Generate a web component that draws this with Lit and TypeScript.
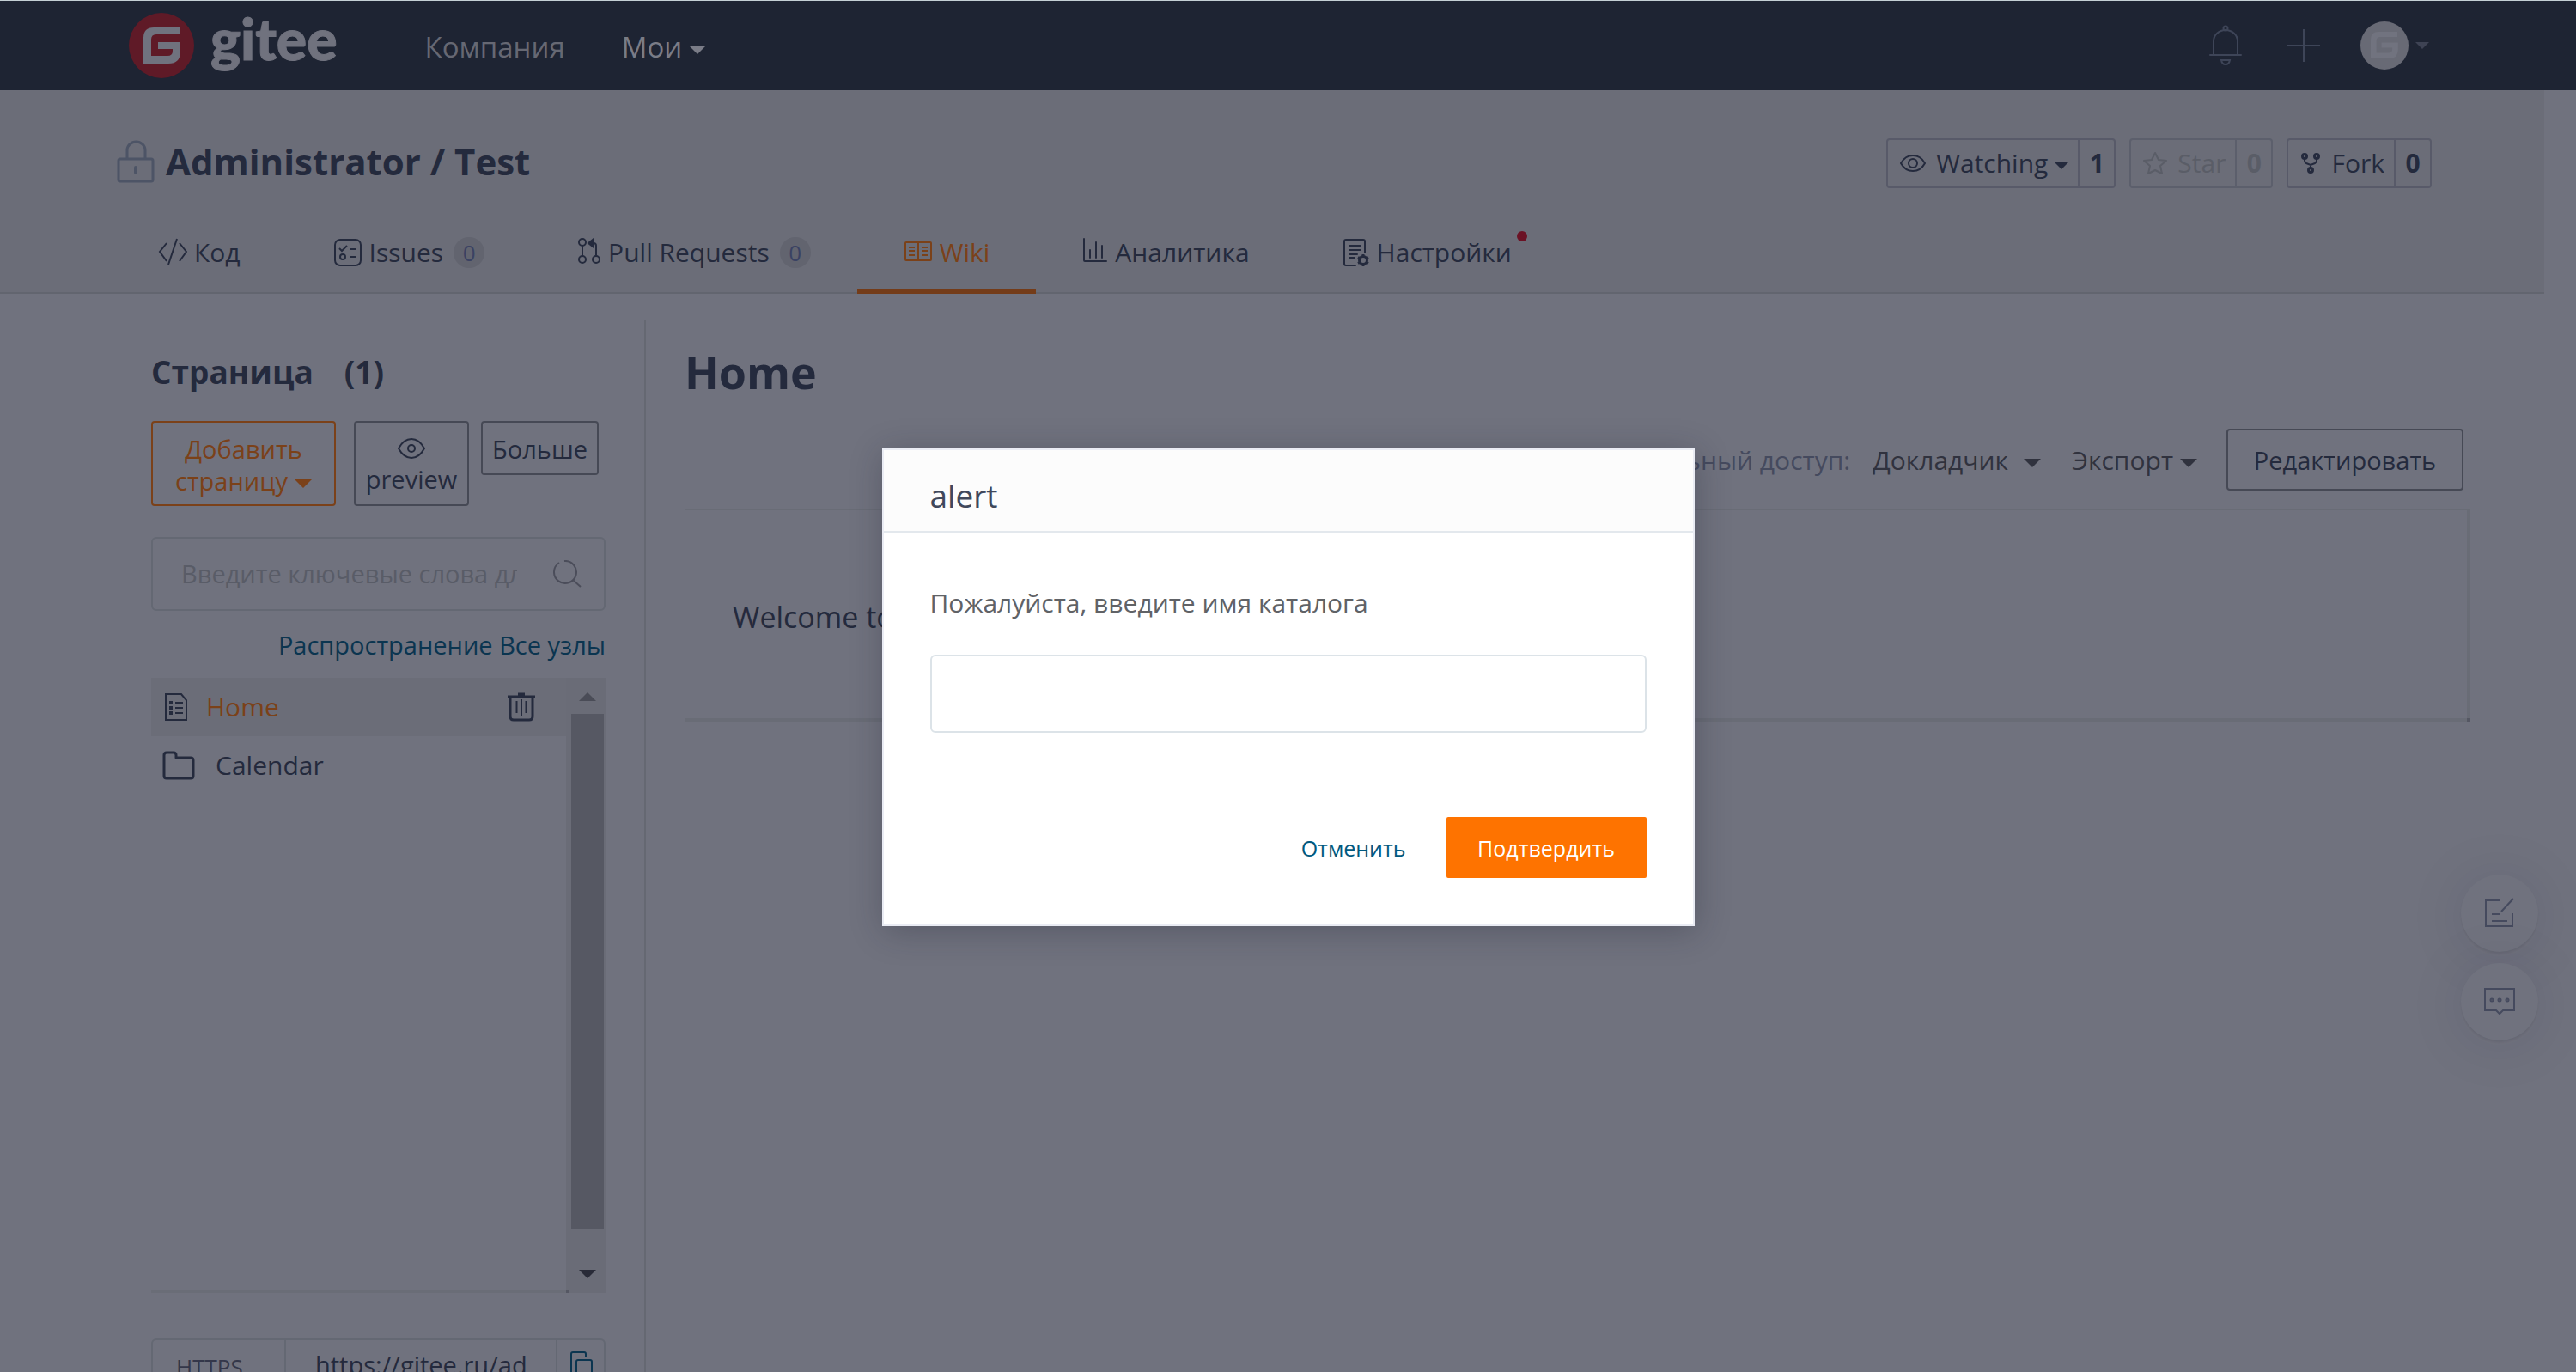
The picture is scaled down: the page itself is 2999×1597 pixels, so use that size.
import { LitElement, html, css } from "lit";
import { customElement } from "lit/decorators.js";

const gShape = "M12 0H42V8H15Q9 8 9 14V33H28Q34 33 34 27V25H17V17H43V28Q43 42 29 42H0V12Q0 0 12 0Z";

const icons = {
  logo: html`<svg width="76" height="76" viewBox="0 0 76 76" aria-hidden="true">
    <circle cx="38" cy="38" r="38" fill="#5f1a27" /><path transform="translate(17 17)" d=${gShape} fill="#70727e" /></svg>`,
  bell: html`<svg width="38" height="48" viewBox="0 0 38 48" fill="none" stroke="#3e4558" stroke-width="2" aria-hidden="true">
    <circle cx="19" cy="4" r="2.500" /><path d="M5 34V19a14 13 0 0 1 28 0V34M1 35H37" stroke-linecap="round" /><path d="M14 41h10q-1 5-5 5t-5-5z" /></svg>`,
  plus: html`<svg width="40" height="40" viewBox="0 0 40 40" fill="none" stroke="#3e4558" stroke-width="2" aria-hidden="true">
    <path d="M20 1V39M1 20H39" /></svg>`,
  avatar: html`<svg width="56" height="56" viewBox="0 0 56 56" aria-hidden="true">
    <circle cx="28" cy="28" r="28" fill="#686a75" /><path transform="translate(12 12) scale(.74)" d=${gShape} fill="#71737f" /></svg>`,
  lock: html`<svg width="44" height="50" viewBox="0 0 44 50" fill="none" stroke="#4d5466" stroke-width="3" aria-hidden="true">
    <rect x="2" y="22" width="40" height="26" rx="2" /><path d="M12 22V12a10.500 10 0 0 1 21 0V22" /><path d="M22 32V38" stroke-width="4" stroke-linecap="round" /></svg>`,
  code: html`<svg width="34" height="32" viewBox="0 0 34 32" fill="none" stroke="currentColor" stroke-width="2" aria-hidden="true">
    <path d="M10 6L2 16L10 27M25 6L33 16L25 27M22 1L12 31" /></svg>`,
  issues: html`<svg width="34" height="34" viewBox="0 0 34 34" fill="none" stroke="currentColor" stroke-width="2" aria-hidden="true">
    <rect x="2" y="2" width="30" height="30" rx="6" /><path d="M7 12l3 3 6-6M19 13h8M19 22h8" /><circle cx="11" cy="22" r="3" /></svg>`,
  pulls: html`<svg width="28" height="30" viewBox="0 0 28 30" fill="none" stroke="currentColor" stroke-width="2" aria-hidden="true">
    <circle cx="6" cy="5" r="4" /><circle cx="6" cy="25" r="4" /><circle cx="22" cy="25" r="4" /><path d="M6 9V21M22 21V9q0-3-3-3H14" /><path d="M18 2l-5 4 5 4z" fill="currentColor" /></svg>`,
  wiki: html`<svg width="34" height="32" viewBox="0 -3 34 32" fill="none" stroke="currentColor" stroke-width="2" aria-hidden="true">
    <path d="M3 2H31Q32 2 32 3V22Q32 23 31 23H3Q2 23 2 22V3Q2 2 3 2ZM17 2V23M6 8h7M6 12h7M6 17h7M21 8h7M21 12h7M21 17h7" /></svg>`,
  stats: html`<svg width="30" height="30" viewBox="0 0 30 30" fill="none" stroke="currentColor" stroke-width="2" stroke-linecap="round" aria-hidden="true">
    <path d="M2 1V26Q2 27 3 27H28M9 23V14M16 23V5M23 23V9" /></svg>`,
  settings: html`<svg width="32" height="34" viewBox="0 0 32 34" fill="none" stroke="currentColor" stroke-width="2" aria-hidden="true">
    <path d="M15 32H4Q2 32 2 30V4Q2 2 4 2H24Q26 2 26 4V17M8 9h13M8 14h13M8 19h9M8 23h6" stroke-linecap="round" /><circle cx="24" cy="26" r="4.500" stroke-width="3" />
    <path d="M24 19v3M24 30v3M18 22.500l3 1.500M27 28l3 1.500M18 29.500l3-1.500M27 24l3-1.500" stroke-width="3" /></svg>`,
  eye: html`<svg width="32" height="24" viewBox="0 0 32 24" fill="none" stroke="currentColor" stroke-width="2" aria-hidden="true">
    <path d="M1 12Q7 1 16 1T31 12Q25 23 16 23T1 12Z" /><circle cx="16" cy="12" r="4" /></svg>`,
  watch: html`<svg width="30" height="20" viewBox="0 0 30 20" fill="none" stroke="currentColor" stroke-width="2" aria-hidden="true">
    <path d="M1 10Q6 1 15 1T29 10Q24 19 15 19T1 10Z" /><circle cx="15" cy="10" r="5" /></svg>`,
  star: html`<svg width="28" height="28" viewBox="0 0 28 28" fill="none" stroke="currentColor" stroke-width="2" stroke-linejoin="round" aria-hidden="true">
    <path d="M14 2l4 8 9 1-7 6 2 9-8-4-8 4 2-9-7-6 9-1z" /></svg>`,
  fork: html`<svg width="24" height="26" viewBox="0 0 24 26" fill="none" stroke="currentColor" stroke-width="3" aria-hidden="true">
    <circle cx="5" cy="5" r="2.500" /><circle cx="19" cy="5" r="2.500" /><circle cx="12" cy="21" r="2.500" /><path d="M5 8v2q0 2 2 3l5 2 5-2q2-1 2-3V8M12 14v5" stroke-width="2" /></svg>`,
  search: html`<svg width="34" height="32" viewBox="0 0 34 32" fill="none" stroke="#4b4d5a" stroke-width="2" aria-hidden="true">
    <path d="M13 1A13 13 0 1 1 7 3M24 24l8 7" /></svg>`,
  page: html`<svg width="28" height="34" viewBox="0 0 28 34" fill="none" stroke="currentColor" stroke-width="2" aria-hidden="true">
    <path d="M2 2H20L26 9V32H2ZM13 12h9M13 18h9M13 24h9" /><path d="M6 12h4M6 18h4M6 24h4" stroke-width="4" /></svg>`,
  trash: html`<svg width="32" height="34" viewBox="0 0 32 34" fill="none" stroke="currentColor" stroke-width="3" aria-hidden="true">
    <path d="M0 5H32M12 2h8M3 5V28q0 4 4 4h18q4 0 4-4V5" /><path d="M16 8v19M10.500 10v14M21.500 10v14" stroke-width="2" /></svg>`,
  folder: html`<svg width="38" height="34" viewBox="0 0 38 34" fill="none" stroke="currentColor" stroke-width="3" stroke-linejoin="round" aria-hidden="true">
    <path d="M2 5q0-3 3-3h8q3 0 3 3v3H33q3 0 3 3V29q0 3-3 3H5q-3 0-3-3Z" /></svg>`,
  copy: html`<svg width="28" height="34" viewBox="0 0 28 34" fill="none" stroke="#0b3550" stroke-width="2" aria-hidden="true">
    <path d="M19 8V4q0-2-2-2H4q-2 0-2 2V26q0 2 2 2h4" /><rect x="8" y="11" width="18" height="22" rx="2" /></svg>`,
  note: html`<svg width="36" height="36" viewBox="0 0 36 36" fill="none" stroke="currentColor" stroke-width="2" aria-hidden="true">
    <path d="M18 3H2V33H33V18M34 1L20 16M9 19h9M9 27h18" /></svg>`,
  chat: html`<svg width="38" height="34" viewBox="0 0 38 34" fill="none" stroke="currentColor" stroke-width="2" aria-hidden="true">
    <path d="M2 2H36V27H23l-4 4-4-4H2Z" /><circle cx="10" cy="15" r="1" stroke-width="3" /><circle cx="19" cy="15" r="1" stroke-width="3" /><circle cx="28" cy="15" r="1" stroke-width="3" /></svg>`,
};

interface Tab {
  label: string;
  icon: unknown;
  count?: number;
  active?: boolean;
  dot?: boolean;
}

const tabs: Tab[] = [
  { label: "Код", icon: icons.code },
  { label: "Issues", icon: icons.issues, count: 0 },
  { label: "Pull Requests", icon: icons.pulls, count: 0 },
  { label: "Wiki", icon: icons.wiki, active: true },
  { label: "Аналитика", icon: icons.stats },
  { label: "Настройки", icon: icons.settings, dot: true },
];

@customElement("app-root")
export class AppRoot extends LitElement {
  static styles = css`
    :host {
      display: block;
      font: 30px/36px "Open Sans", "Noto Sans", sans-serif;
      color: #242a3d;
      background: #70727e;
    }
    * { box-sizing: border-box; }
    svg { display: block; flex: none; }
    button, input {
      font: inherit;
      color: inherit;
      background: none;
      border: 0;
      margin: 0;
      padding: 0;
    }
    a { color: inherit; text-decoration: none; }
    h1, h2, p { margin: 0; }
    .page { height: 100vh; overflow: hidden; display: flex; flex-direction: column; }

    .topbar {
      display: flex;
      align-items: center;
      flex: none;
      height: 105px;
      padding: 0 171px 0 150px;
      border-top: 1px solid #c5d0d5;
      background: #1e2433;
      color: #666873;
    }
    .brand { display: flex; align-items: center; gap: 19px; margin-right: 102px; }
    .wordmark { font: 900 66px/84px Lato, sans-serif; color: #70727e; padding-bottom: 16px; -webkit-text-stroke: 1px #70727e; }
    .topnav { display: flex; gap: 66px; font-size: 33px; padding-top: 4px; }
    .topnav .mine { color: #7a7c87; }
    .tools { display: flex; align-items: center; margin-left: auto; }
    .bell { margin-right: 52px; }
    .plus { margin-right: 46px; }
    .account { display: flex; align-items: center; color: #3e4354; }

    .caret::after {
      content: "";
      display: inline-block;
      vertical-align: middle;
      margin-left: 8px;
      border: 10px solid transparent;
      border-top-color: currentColor;
      border-bottom: 0;
    }
    .caret.small::after { border-width: 8px; border-bottom: 0; }
    .caret.wide::after { margin-left: 18px; }

    .body { flex: 1; min-height: 0; display: flex; flex-direction: column; margin-right: 37px; }
    .repo { flex: none; background: #6b6d78; border-bottom: 2px solid #62656f; }
    .repo-head {
      display: flex;
      align-items: center;
      justify-content: space-between;
      height: 170px;
      padding: 0 131px 0 136px;
    }
    .repo-title { display: flex; align-items: center; gap: 13px; padding-bottom: 4px; font-size: 42px; line-height: 56px; font-weight: 700; }
    .actions { display: flex; gap: 16px; }
    .action {
      display: flex;
      height: 58px;
      border: 2px solid #585a69;
      border-radius: 4px;
    }
    .action.off { color: #5a5d67; border-color: #5c5f6c; }
    .action button { display: flex; align-items: center; gap: 12px; padding: 0 11px 0 14px; }
    .action .num { display: flex; align-items: center; justify-content: center; width: 42px; border-left: 2px solid #585a69; font-weight: 700; }
    .action.off .num { border-color: #5c5f6c; }

    .tabs { display: flex; height: 69px; padding-left: 130px; margin-top: -2px; margin-bottom: -2px; }
    .tab {
      display: flex;
      justify-content: center;
      gap: 8px;
      padding: 3px 54px 0 54px;
      border-bottom: 6px solid transparent;
    }
    .tab svg { margin-top: 1px; }
    .tab.active { color: #7b4119; border-color: #743c19; }
    .badge {
      width: 36px;
      height: 36px;
      margin-left: 4px;
      border-radius: 50%;
      background: #62646f;
      color: #3a4263;
      font-size: 26px;
      text-align: center;
    }
    .dot { width: 12px; height: 12px; border-radius: 50%; background: #6b1225; margin: -7px 0 0 -2px; }

    .columns { flex: 1; min-height: 0; display: flex; margin-top: 31px; }
    .sidebar { flex: none; width: 752px; padding: 32px 45px 0 176px; border-right: 2px solid #656872; }
    .side-title { display: flex; gap: 36px; font-size: 37px; line-height: 56px; font-weight: 700; }
    .side-buttons { display: flex; align-items: flex-start; margin-top: 29px; font-size: 29px; }
    .outline {
      border: 2px solid #464955;
      border-radius: 4px;
      line-height: 37px;
    }
    .outline svg { margin: 8px auto 5px; }
    .outline.add { width: 215px; margin-right: 21px; padding: 12px 0 9px; border-color: #7b4119; color: #7b4119; }
    .outline.preview { width: 134px; margin-right: 14px; padding: 10px 0 11px; }
    .outline.more { width: 137px; padding: 12px 0 10px; }

    .search {
      display: flex;
      align-items: center;
      height: 86px;
      margin-top: 36px;
      padding: 0 25px 0 33px;
      border: 2px solid #646873;
      border-radius: 6px;
      font-size: 29px;
    }
    .search input { flex: 1; min-width: 0; outline: 0; margin-right: 42px; }
    .search input::placeholder { color: #595c67; opacity: 1; }
    .expand { display: block; text-align: right; color: #0b3550; margin-top: 22px; font-size: 29px; }
    .tree { display: flex; height: 716px; margin-top: 20px; }
    .nodes { position: relative; flex: 1; min-width: 0; border-bottom: 4px solid #6a6d77; }
    .node { display: flex; align-items: center; height: 68px; padding: 0 36px 0 15px; gap: 21px; }
    .node.current { background: #6b6d78; }
    .node.current a { color: #7b4119; }
    .node button { margin-left: auto; }
    .node.folder { padding-left: 13px; gap: 24px; }
    .scroll {
      width: 46px;
      flex: none;
      display: flex;
      flex-direction: column;
      align-items: center;
      padding: 17px 0 17px 4px;
      background: #6a6c77;
    }
    .scroll .up { border: 10px solid transparent; border-top: 0; border-bottom-color: #4a4c57; }
    .scroll .thumb { flex: 1; width: 38px; margin: 15px 0 47px; background: #565863; }
    .scroll .down { border: 10px solid transparent; border-bottom: 0; border-top-color: #292b38; }
    .nodes::after, .article::after {
      content: "";
      position: absolute;
      right: -4px;
      bottom: -4px;
      width: 4px;
      height: 4px;
      background: #555763;
    }
    .clone {
      display: flex;
      margin-top: 53px;
      height: 86px;
      border: 2px solid #646873;
      border-radius: 6px;
      font-size: 29px;
    }
    .proto { width: 155px; padding: 11px 27px; border-right: 2px solid #646873; color: #34374a; font-size: 26px; line-height: 40px; }
    .url { flex: 1; min-width: 0; padding: 0 30px 24px 34px; border-right: 2px solid #646873; line-height: 40px; }
    .copy { width: 54px; padding: 12px 12px 12px 14px; align-self: flex-start; }

    .main { flex: 1; min-width: 0; padding: 28px 86px 0 45px; }
    .main h1 { font-size: 52px; line-height: 64px; }
    .bar {
      display: flex;
      align-items: center;
      justify-content: flex-end;
      height: 72px;
      margin-top: 34px;
      padding-right: 8px;
      color: #30323e;
    }
    .access { color: #454a5e; margin-right: 26px; }
    .access, .bar .role, .bar .export, .edit { padding-top: 2px; }
    .bar .role { margin-right: 36px; }
    .bar .export { margin-right: 34px; }
    .edit { width: 276px; height: 72px; border: 2px solid #464955; border-radius: 4px; color: #242a3d; font-size: 29px; }
    .article {
      position: relative;
      height: 248px;
      margin-top: 21px;
      padding: 106px 56px;
      border: solid #696c76;
      border-width: 2px 4px 4px 0;
      font-size: 34px;
    }

    .floats { position: absolute; right: 44px; top: 1018px; display: flex; flex-direction: column; gap: 13px; }
    .floats button {
      width: 90px;
      height: 90px;
      border-radius: 50%;
      background: #70727e;
      color: #454a5e;
      display: flex;
      align-items: center;
      justify-content: center;
      box-shadow: 0 2px 2px rgba(30, 34, 50, 0.08), 0 4px 68px rgba(30, 34, 50, 0.1);
    }

    .dimmer { position: absolute; inset: 0; padding-top: 3px; display: flex; align-items: center; justify-content: center; }
    .dialog {
      width: 946px;
      border: 2px solid #eaecf4;
      background: #fff;
      box-shadow: 2px 6px 36px rgba(30, 32, 50, 0.3);
      color: #40485b;
    }
    .dialog-head { padding: 32px 54px 20px; border-bottom: 2px solid #e3e8ed; background: #fcfcfc; font-size: 37px; line-height: 42px; font-weight: 400; }
    .dialog-body { padding: 64px 54px 0; }
    .dialog-body label { display: block; color: #606266; }
    .dialog-body input { display: block; width: 100%; height: 91px; margin-top: 42px; padding: 0 24px; border: 2px solid #dce3e8; border-radius: 6px; }
    .dialog-foot { display: flex; justify-content: flex-end; align-items: center; gap: 47px; padding: 98px 54px 54px; font-size: 25px; }
    .cancel { color: #005980; }
    .confirm { width: 233px; height: 71px; border-radius: 2px; background: #fe7300; color: #fff; }
  `;

  private renderTab(t: Tab) {
    return html`<a class="tab ${t.active ? "active" : ""}" href="#">${t.icon}<span>${t.label}</span>
      ${t.count !== undefined ? html`<span class="badge">${t.count}</span>` : ""}
      ${t.dot ? html`<span class="dot"></span>` : ""}</a>`;
  }

  render() {
    return html`
      <div class="page">
        <header class="topbar">
          <a class="brand" href="#">${icons.logo}<span class="wordmark">gitee</span></a>
          <nav class="topnav"><a href="#">Компания</a><a class="mine caret" href="#">Мои</a></nav>
          <div class="tools">
            <button class="bell" aria-label="Уведомления">${icons.bell}</button>
            <button class="plus" aria-label="Создать">${icons.plus}</button>
            <button class="account caret small" aria-label="Профиль">${icons.avatar}</button>
          </div>
        </header>
        <div class="body">
          <section class="repo">
            <div class="repo-head">
              <h2 class="repo-title">${icons.lock}<span>Administrator / Test</span></h2>
              <div class="actions">
                <div class="action"><button>${icons.watch}<span class="caret small">Watching</span></button><span class="num">1</span></div>
                <div class="action off"><button>${icons.star}<span>Star</span></button><span class="num">0</span></div>
                <div class="action"><button>${icons.fork}<span>Fork</span></button><span class="num">0</span></div>
              </div>
            </div>
            <nav class="tabs">${tabs.map((t) => this.renderTab(t))}</nav>
          </section>
          <div class="columns">
            <aside class="sidebar">
              <h2 class="side-title"><span>Страница</span><span>(1)</span></h2>
              <div class="side-buttons">
                <button class="outline add">Добавить<br /><span class="caret">страницу</span></button>
                <button class="outline preview">${icons.eye}preview</button>
                <button class="outline more">Больше</button>
              </div>
              <div class="search">
                <input type="text" aria-label="Поиск" placeholder="Введите ключевые слова для поиска" />
                ${icons.search}
              </div>
              <a class="expand" href="#">Распространение Все узлы</a>
              <div class="tree">
                <div class="nodes">
                  <div class="node current">${icons.page}<a href="#">Home</a><button aria-label="Удалить">${icons.trash}</button></div>
                  <div class="node folder">${icons.folder}<a href="#">Calendar</a></div>
                </div>
                <div class="scroll"><span class="up"></span><span class="thumb"></span><span class="down"></span></div>
              </div>
              <div class="clone">
                <span class="proto">HTTPS</span>
                <input class="url" aria-label="URL" value="https://gitee.ru/ad" readonly />
                <button class="copy" aria-label="Копировать">${icons.copy}</button>
              </div>
            </aside>
            <main class="main">
              <h1>Home</h1>
              <div class="bar">
                <span class="access">Персональный доступ:</span>
                <button class="role caret wide">Докладчик</button>
                <button class="export caret">Экспорт</button>
                <button class="edit">Редактировать</button>
              </div>
              <article class="article">Welcome to Wiki</article>
            </main>
          </div>
        </div>
      </div>
      <div class="floats">
        <button aria-label="Заметка">${icons.note}</button>
        <button aria-label="Обратная связь">${icons.chat}</button>
      </div>
      <div class="dimmer">
        <form class="dialog" role="dialog" aria-labelledby="dialog-title">
          <h2 class="dialog-head" id="dialog-title">alert</h2>
          <div class="dialog-body">
            <label for="dir-name">Пожалуйста, введите имя каталога</label>
            <input id="dir-name" type="text" />
          </div>
          <div class="dialog-foot">
            <button type="button" class="cancel">Отменить</button>
            <button type="button" class="confirm">Подтвердить</button>
          </div>
        </form>
      </div>
    `;
  }
}
